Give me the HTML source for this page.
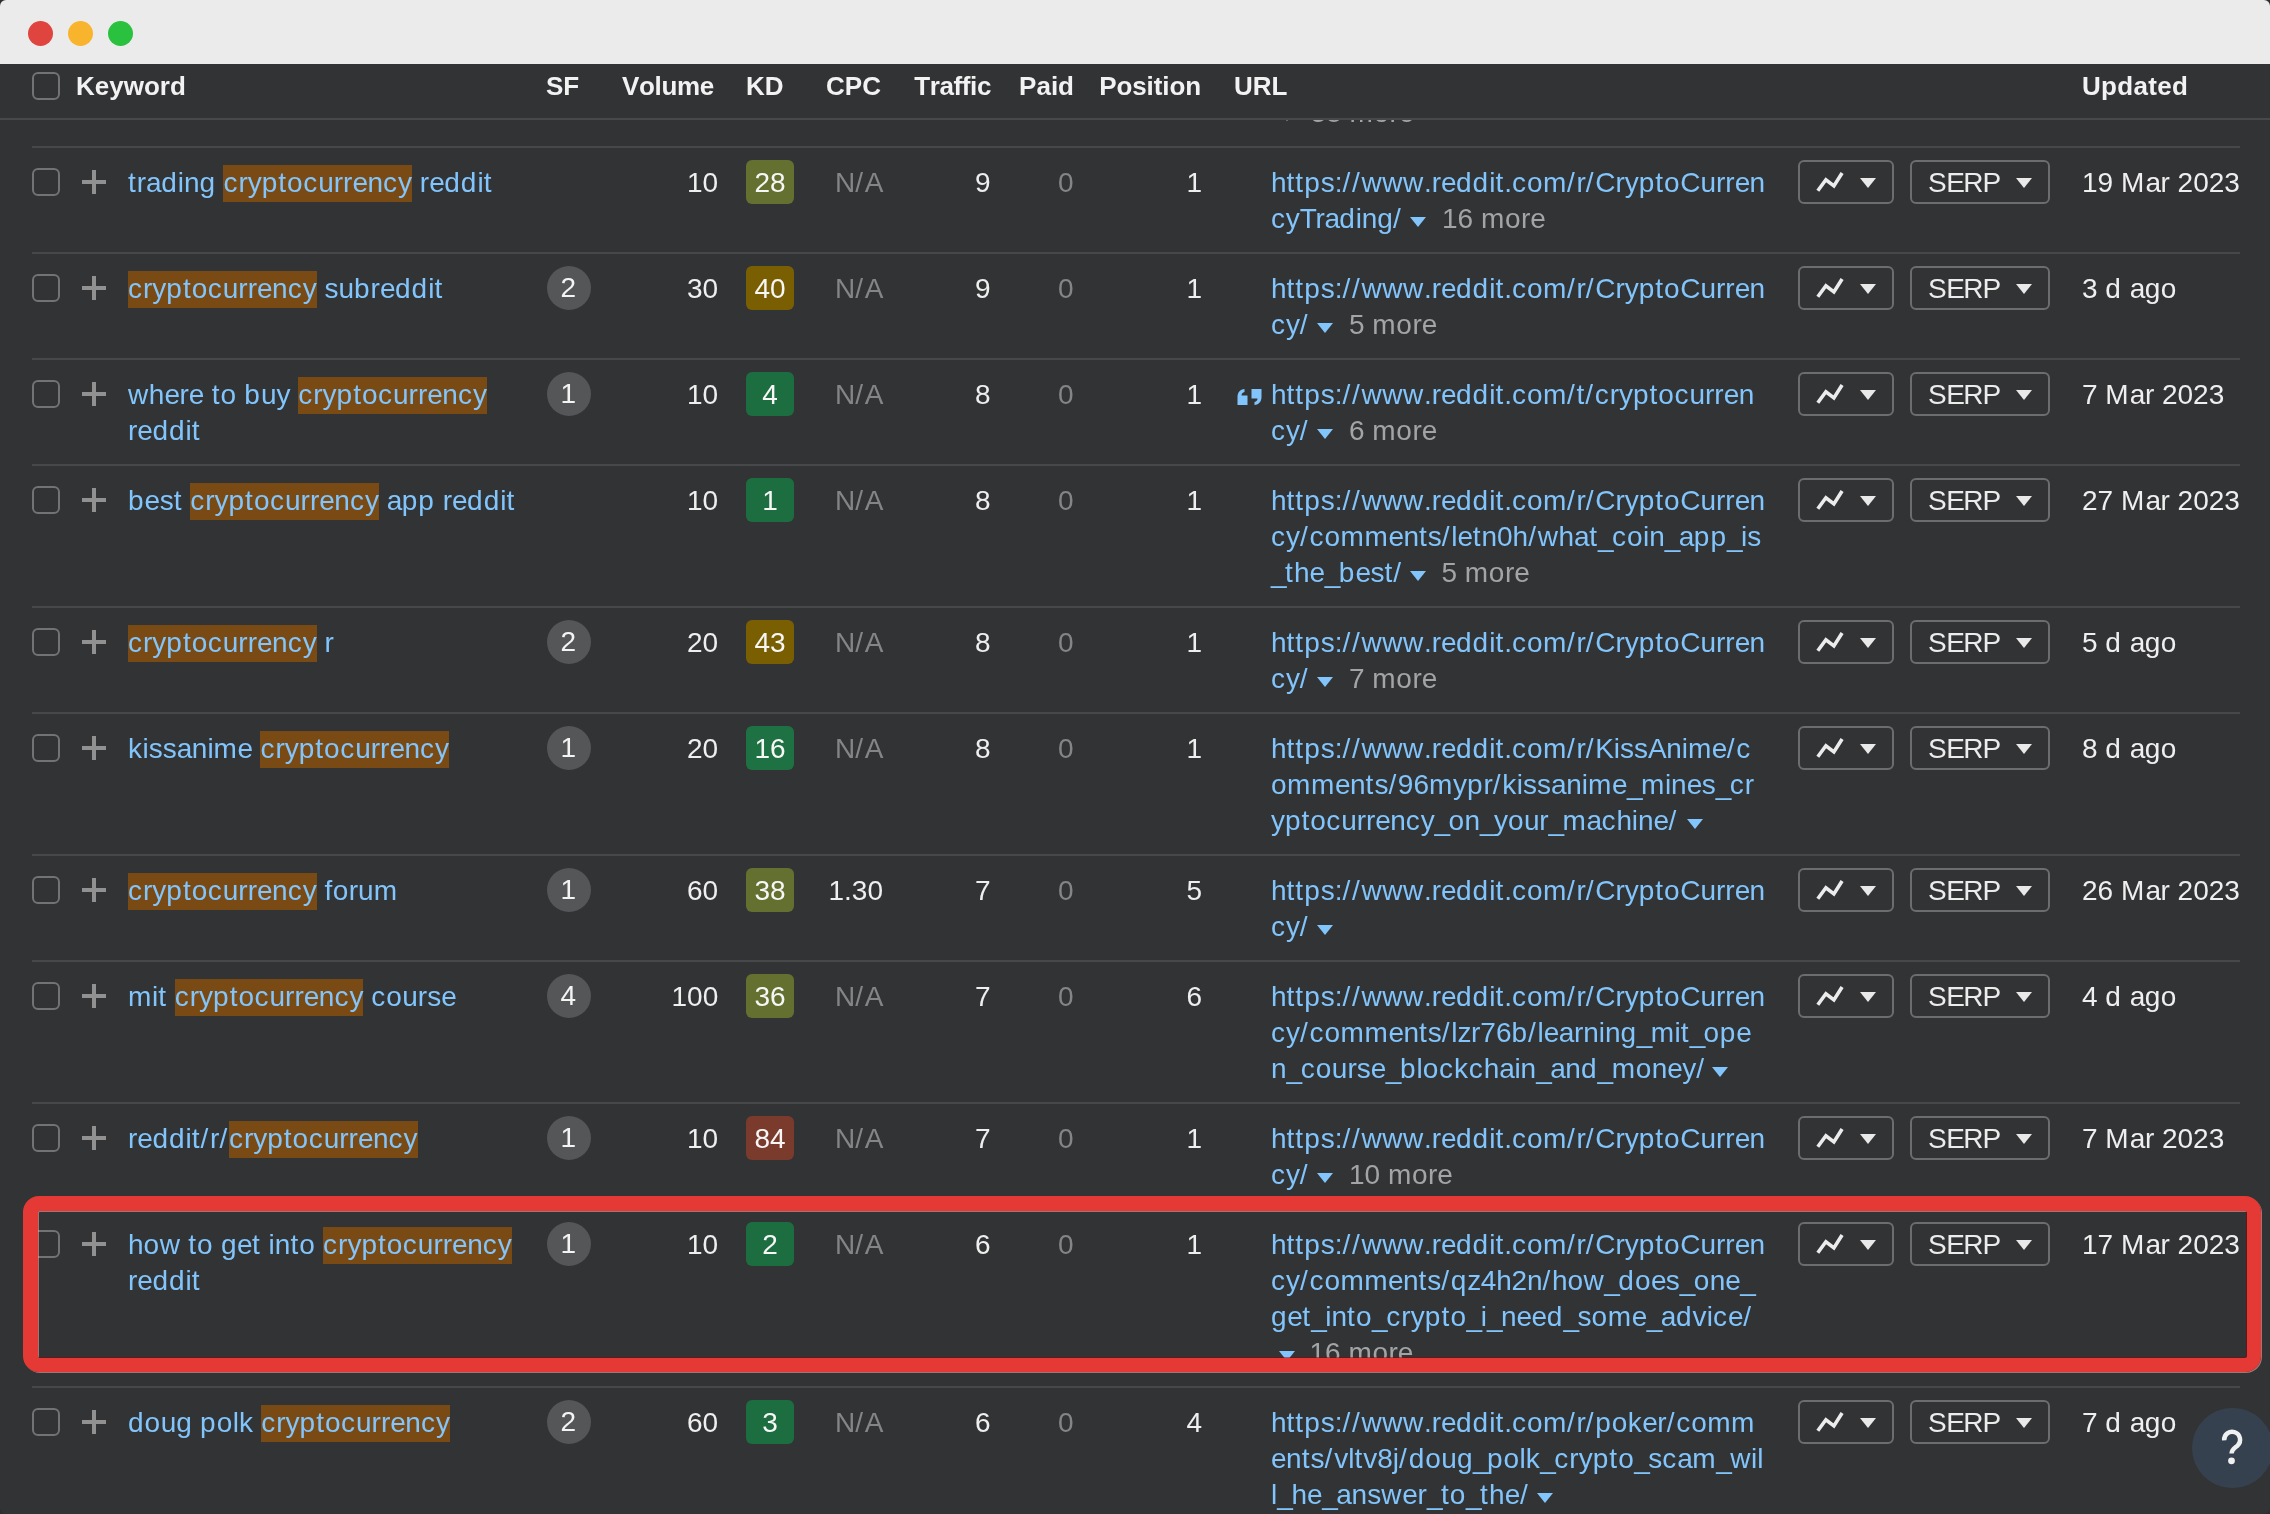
<!DOCTYPE html><html lang="en"><head><meta charset="utf-8"><title>Keywords</title><style>
*{box-sizing:border-box;margin:0;padding:0}
html,body{width:2270px;height:1514px;overflow:hidden;background:#2e2e2f}
body{font-family:"Liberation Sans",sans-serif;font-size:28px;line-height:36px;color:#efefef;position:relative;font-kerning:none}
#win{position:absolute;left:0;top:0;width:2270px;height:1514px;border-radius:6px;overflow:hidden;background:#323335;will-change:transform}
#tb{position:absolute;left:0;top:0;width:2270px;height:64px;background:#ebebeb}
.dot{position:absolute;top:21px;width:25px;height:25px;border-radius:50%}
#hd{position:absolute;left:0;top:64px;width:2270px;height:56px;background:#323335;border-bottom:2px solid #48494b;z-index:5;font-weight:700;font-size:26px;line-height:30px;color:#f2f2f2}
#hd span{position:absolute;top:7px;white-space:nowrap}
.cb{position:absolute;left:32px;width:28px;height:28px;border:2px solid #727375;border-radius:6px}
.row{position:absolute;left:32px;width:2208px;border-top:2px solid #47484a}
.row>*{position:absolute;white-space:nowrap}
.row .cb{left:0;top:20px}
.plus{left:50px;top:22px;width:24px;height:24px}
.plus:before{content:"";position:absolute;left:0;top:10px;width:24px;height:4px;background:#919191}
.plus:after{content:"";position:absolute;left:10px;top:0;width:4px;height:24px;background:#919191}
.kw{left:96px;top:17px;color:#82c5fc}
.kw b{font-weight:400;background:#7a4a14;padding:2px 0 4px}
.sf{left:515px;top:12px;width:44px;height:44px;border-radius:50%;background:#555658;text-align:center;line-height:44px;color:#f4f4f4;padding-right:1.5px}
.num{top:17px;text-align:right}
.vol{right:1521.8px}
.kd{left:714px;top:12px;width:48px;height:44px;border-radius:6px;text-align:center;line-height:45px;color:#f6f6f6}
.cpc{right:1357px}
.tr{right:1249.5px}
.paid{right:1166.5px;color:#848587}
.pos{right:1038px}
.mut{color:#848587}
.url{left:1239px;top:17px;color:#82c5fc}
.url div{height:36px;position:relative}
.more{color:#a3a4a5;position:absolute;top:0}
.tri{position:absolute;top:16px;width:0;height:0;border-left:8px solid transparent;border-right:8px solid transparent;border-top:10px solid #82c5fc}
.btn{top:12px;height:44px;border:2px solid #6c6d6f;border-radius:6px;color:#ececec}
.b1{left:1766px;width:96px}
.b2{left:1878px;width:140px}
.btn i{position:absolute;top:16px;width:0;height:0;border-left:8px solid transparent;border-right:8px solid transparent;border-top:10px solid #e9e9e9}
.b1 i{left:60px}
.b2 i{left:104px}
.b2>span{position:absolute;left:16px;top:3px}
.b1 svg{position:absolute;left:12px;top:5.7px}
.upd{left:2050px;top:17px}
.q{left:1205px;top:28px;line-height:0}
.q svg{display:block}
#red{position:absolute;left:23px;top:1196px;width:2238px;height:176px;border:solid #e53935;border-width:15px 14px 14px 15px;border-radius:16px;z-index:8;box-shadow:1px 1px 0 rgba(255,170,170,.55),inset 1px 1px 0 rgba(255,170,170,.55),inset -1px -1px 0 rgba(140,0,0,.5)}
#help{position:absolute;left:2192px;top:1407.5px;width:80.6px;height:80.6px;border-radius:50%;background:#36414f;z-index:9}
#help svg{position:absolute;left:0;top:0.5px}
</style></head><body><div id="win">
<div id="tb"><div class="dot" style="left:27.5px;background:#e0443e"></div><div class="dot" style="left:67.5px;background:#f9b42d"></div><div class="dot" style="left:107.5px;background:#2ac13f"></div></div>
<div id="hd"><div class="cb" style="top:8px"></div><span style="left:76px">Keyword</span><span style="left:546px">SF</span><span style="right:1556px;letter-spacing:-.3px">Volume</span><span style="left:746px">KD</span><span style="right:1389px">CPC</span><span style="right:1279px;letter-spacing:-.4px">Traffic</span><span style="right:1196px">Paid</span><span style="right:1069px;letter-spacing:-.1px">Position</span><span style="left:1234px">URL</span><span style="left:2082px;letter-spacing:.3px">Updated</span></div>
<div style="position:absolute;left:1271px;top:95px;height:36px;white-space:nowrap"><i class="tri" style="left:8px"></i><span class="more" style="left:39.5px">38 <span style="letter-spacing:0.6px">m</span><span style="letter-spacing:0.5px">o</span>r<span style="letter-spacing:-0.5px">e</span></span></div>
<div class="row" style="top:146px;height:106px"><div class="cb"></div><div class="plus"></div><div class="kw"><span style="letter-spacing:1px">t</span>r<span style="letter-spacing:-0.5px">a</span><span style="letter-spacing:1px">d</span>in<span style="letter-spacing:0.5px">g</span> <b><span style="letter-spacing:1px">c</span>ry<span style="letter-spacing:1px">pt</span><span style="letter-spacing:0.5px">o</span><span style="letter-spacing:1px">c</span>urr<span style="letter-spacing:-0.5px">e</span>n<span style="letter-spacing:1px">c</span>y</b> r<span style="letter-spacing:-0.5px">e</span><span style="letter-spacing:1px">dd</span>i<span style="letter-spacing:1px">t</span></div><div class="num vol">10</div><div class="kd" style="background:#647030">28</div><div class="num cpc mut">N<span style="letter-spacing:1.7px">/</span><span style="letter-spacing:-0.5px">A</span></div><div class="num tr">9</div><div class="num paid">0</div><div class="num pos">1</div><div class="url"><div>h<span style="letter-spacing:1px">ttp</span>s:<span style="letter-spacing:1.7px">//</span><span style="letter-spacing:0.6px">www</span>.r<span style="letter-spacing:-0.6px">e</span><span style="letter-spacing:1px">dd</span>i<span style="letter-spacing:1px">t</span>.<span style="letter-spacing:1px">c</span><span style="letter-spacing:0.5px">om</span><span style="letter-spacing:1.7px">/</span>r<span style="letter-spacing:1.7px">/</span>Cry<span style="letter-spacing:1px">pt</span><span style="letter-spacing:0.5px">o</span>Curr<span style="letter-spacing:-0.6px">e</span>n</div><div><span style="letter-spacing:0.8px">c</span><span style="letter-spacing:-0.2px">y</span><span style="letter-spacing:-1.3px">T</span><span style="letter-spacing:-0.2px">r</span><span style="letter-spacing:-0.8px">a</span><span style="letter-spacing:0.8px">d</span><span style="letter-spacing:-0.2px">in</span><span style="letter-spacing:0.3px">g</span><span style="letter-spacing:1.5px">/</span><i class="tri" style="left:139px"></i><span class="more" style="left:171px">16 <span style="letter-spacing:0.6px">m</span><span style="letter-spacing:0.5px">o</span>r<span style="letter-spacing:-0.5px">e</span></span></div></div><div class="btn b1"><svg width="32" height="26" viewBox="0 0 32 26"><polyline points="5.8,22.7 13.9,11.8 21.9,17.9 30.1,5" fill="none" stroke="#ececec" stroke-width="3.6" stroke-linejoin="miter"/></svg><i></i></div><div class="btn b2"><span><span style="letter-spacing:-0.5px">S</span><span style="letter-spacing:-1.6px">E</span><span style="letter-spacing:-1px">R</span><span style="letter-spacing:-0.5px">P</span></span><i></i></div><div class="upd">19 <span style="letter-spacing:1.1px">M</span><span style="letter-spacing:-0.5px">a</span>r 2023</div></div>
<div class="row" style="top:252px;height:106px"><div class="cb"></div><div class="plus"></div><div class="kw"><b><span style="letter-spacing:1px">c</span>ry<span style="letter-spacing:1px">pt</span><span style="letter-spacing:0.5px">o</span><span style="letter-spacing:1px">c</span>urr<span style="letter-spacing:-0.5px">e</span>n<span style="letter-spacing:1px">c</span>y</b> su<span style="letter-spacing:1px">b</span>r<span style="letter-spacing:-0.5px">e</span><span style="letter-spacing:1px">dd</span>i<span style="letter-spacing:1px">t</span></div><div class="sf">2</div><div class="num vol">30</div><div class="kd" style="background:#7a5f02">40</div><div class="num cpc mut">N<span style="letter-spacing:1.7px">/</span><span style="letter-spacing:-0.5px">A</span></div><div class="num tr">9</div><div class="num paid">0</div><div class="num pos">1</div><div class="url"><div>h<span style="letter-spacing:1px">ttp</span>s:<span style="letter-spacing:1.7px">//</span><span style="letter-spacing:0.6px">www</span>.r<span style="letter-spacing:-0.6px">e</span><span style="letter-spacing:1px">dd</span>i<span style="letter-spacing:1px">t</span>.<span style="letter-spacing:1px">c</span><span style="letter-spacing:0.5px">om</span><span style="letter-spacing:1.7px">/</span>r<span style="letter-spacing:1.7px">/</span>Cry<span style="letter-spacing:1px">pt</span><span style="letter-spacing:0.5px">o</span>Curr<span style="letter-spacing:-0.6px">e</span>n</div><div><span style="letter-spacing:0.9px">c</span><span style="letter-spacing:-0.2px">y</span><span style="letter-spacing:1.6px">/</span><i class="tri" style="left:46px"></i><span class="more" style="left:78px">5 <span style="letter-spacing:0.6px">m</span><span style="letter-spacing:0.5px">o</span>r<span style="letter-spacing:-0.5px">e</span></span></div></div><div class="btn b1"><svg width="32" height="26" viewBox="0 0 32 26"><polyline points="5.8,22.7 13.9,11.8 21.9,17.9 30.1,5" fill="none" stroke="#ececec" stroke-width="3.6" stroke-linejoin="miter"/></svg><i></i></div><div class="btn b2"><span><span style="letter-spacing:-0.5px">S</span><span style="letter-spacing:-1.6px">E</span><span style="letter-spacing:-1px">R</span><span style="letter-spacing:-0.5px">P</span></span><i></i></div><div class="upd">3 <span style="letter-spacing:1px">d</span> <span style="letter-spacing:-0.5px">a</span><span style="letter-spacing:0.5px">go</span></div></div>
<div class="row" style="top:358px;height:106px"><div class="cb"></div><div class="plus"></div><div class="kw"><span style="letter-spacing:0.6px">w</span>h<span style="letter-spacing:-0.5px">e</span>r<span style="letter-spacing:-0.5px">e</span> <span style="letter-spacing:1px">t</span><span style="letter-spacing:0.5px">o</span> <span style="letter-spacing:1px">b</span>uy <b><span style="letter-spacing:1px">c</span>ry<span style="letter-spacing:1px">pt</span><span style="letter-spacing:0.5px">o</span><span style="letter-spacing:1px">c</span>urr<span style="letter-spacing:-0.5px">e</span>n<span style="letter-spacing:1px">c</span>y</b><br>r<span style="letter-spacing:-0.5px">e</span><span style="letter-spacing:1px">dd</span>i<span style="letter-spacing:1px">t</span></div><div class="sf">1</div><div class="num vol">10</div><div class="kd" style="background:#1c6d40">4</div><div class="num cpc mut">N<span style="letter-spacing:1.7px">/</span><span style="letter-spacing:-0.5px">A</span></div><div class="num tr">8</div><div class="num paid">0</div><div class="num pos">1</div><div class="q"><svg width="26" height="18" viewBox="0 0 26 18"><path d="M0.5,17 V9 C0.5,4.5 3,1.5 7.5,1 V4 C5.5,4.5 4.6,5.8 4.5,7.5 H10.5 V17 Z M14.5,1 H24.5 V9 C24.5,13.5 22,16.5 17.5,17 V14 C19.5,13.5 20.4,12.2 20.5,10.5 H14.5 Z" fill="#82c5fc"/></svg></div><div class="url"><div>h<span style="letter-spacing:1px">ttp</span>s:<span style="letter-spacing:1.7px">//</span><span style="letter-spacing:0.6px">www</span>.r<span style="letter-spacing:-0.6px">e</span><span style="letter-spacing:1px">dd</span>i<span style="letter-spacing:1px">t</span>.<span style="letter-spacing:1px">c</span><span style="letter-spacing:0.5px">om</span><span style="letter-spacing:1.7px">/</span><span style="letter-spacing:1px">t</span><span style="letter-spacing:1.7px">/</span><span style="letter-spacing:1px">c</span>ry<span style="letter-spacing:1px">pt</span><span style="letter-spacing:0.5px">o</span><span style="letter-spacing:1px">c</span>urr<span style="letter-spacing:-0.6px">e</span>n</div><div><span style="letter-spacing:0.9px">c</span><span style="letter-spacing:-0.2px">y</span><span style="letter-spacing:1.6px">/</span><i class="tri" style="left:46px"></i><span class="more" style="left:78px">6 <span style="letter-spacing:0.6px">m</span><span style="letter-spacing:0.5px">o</span>r<span style="letter-spacing:-0.5px">e</span></span></div></div><div class="btn b1"><svg width="32" height="26" viewBox="0 0 32 26"><polyline points="5.8,22.7 13.9,11.8 21.9,17.9 30.1,5" fill="none" stroke="#ececec" stroke-width="3.6" stroke-linejoin="miter"/></svg><i></i></div><div class="btn b2"><span><span style="letter-spacing:-0.5px">S</span><span style="letter-spacing:-1.6px">E</span><span style="letter-spacing:-1px">R</span><span style="letter-spacing:-0.5px">P</span></span><i></i></div><div class="upd">7 <span style="letter-spacing:1.1px">M</span><span style="letter-spacing:-0.5px">a</span>r 2023</div></div>
<div class="row" style="top:464px;height:142px"><div class="cb"></div><div class="plus"></div><div class="kw"><span style="letter-spacing:1px">b</span><span style="letter-spacing:-0.5px">e</span>s<span style="letter-spacing:1px">t</span> <b><span style="letter-spacing:1px">c</span>ry<span style="letter-spacing:1px">pt</span><span style="letter-spacing:0.5px">o</span><span style="letter-spacing:1px">c</span>urr<span style="letter-spacing:-0.5px">e</span>n<span style="letter-spacing:1px">c</span>y</b> <span style="letter-spacing:-0.5px">a</span><span style="letter-spacing:1px">pp</span> r<span style="letter-spacing:-0.5px">e</span><span style="letter-spacing:1px">dd</span>i<span style="letter-spacing:1px">t</span></div><div class="num vol">10</div><div class="kd" style="background:#1c6d40">1</div><div class="num cpc mut">N<span style="letter-spacing:1.7px">/</span><span style="letter-spacing:-0.5px">A</span></div><div class="num tr">8</div><div class="num paid">0</div><div class="num pos">1</div><div class="url"><div>h<span style="letter-spacing:1px">ttp</span>s:<span style="letter-spacing:1.7px">//</span><span style="letter-spacing:0.6px">www</span>.r<span style="letter-spacing:-0.6px">e</span><span style="letter-spacing:1px">dd</span>i<span style="letter-spacing:1px">t</span>.<span style="letter-spacing:1px">c</span><span style="letter-spacing:0.5px">om</span><span style="letter-spacing:1.7px">/</span>r<span style="letter-spacing:1.7px">/</span>Cry<span style="letter-spacing:1px">pt</span><span style="letter-spacing:0.5px">o</span>Curr<span style="letter-spacing:-0.6px">e</span>n</div><div><span style="letter-spacing:1px">c</span>y<span style="letter-spacing:1.7px">/</span><span style="letter-spacing:1px">c</span><span style="letter-spacing:0.5px">o</span><span style="letter-spacing:0.6px">mm</span><span style="letter-spacing:-0.5px">e</span>n<span style="letter-spacing:1px">t</span>s<span style="letter-spacing:1.7px">/</span>l<span style="letter-spacing:-0.5px">e</span><span style="letter-spacing:1px">t</span>n0h<span style="letter-spacing:1.7px">/</span><span style="letter-spacing:0.6px">w</span>h<span style="letter-spacing:-0.5px">a</span><span style="letter-spacing:1px">t</span><span style="letter-spacing:-1.6px">_</span><span style="letter-spacing:1px">c</span><span style="letter-spacing:0.5px">o</span>in<span style="letter-spacing:-1.6px">_</span><span style="letter-spacing:-0.5px">a</span><span style="letter-spacing:1px">pp</span><span style="letter-spacing:-1.6px">_</span>is</div><div><span style="letter-spacing:-1.5px">_</span><span style="letter-spacing:1.1px">t</span>h<span style="letter-spacing:-0.5px">e</span><span style="letter-spacing:-1.5px">_</span><span style="letter-spacing:1.1px">b</span><span style="letter-spacing:-0.5px">e</span>s<span style="letter-spacing:1.1px">t</span><span style="letter-spacing:1.8px">/</span><i class="tri" style="left:139px"></i><span class="more" style="left:170.5px">5 <span style="letter-spacing:0.6px">m</span><span style="letter-spacing:0.5px">o</span>r<span style="letter-spacing:-0.5px">e</span></span></div></div><div class="btn b1"><svg width="32" height="26" viewBox="0 0 32 26"><polyline points="5.8,22.7 13.9,11.8 21.9,17.9 30.1,5" fill="none" stroke="#ececec" stroke-width="3.6" stroke-linejoin="miter"/></svg><i></i></div><div class="btn b2"><span><span style="letter-spacing:-0.5px">S</span><span style="letter-spacing:-1.6px">E</span><span style="letter-spacing:-1px">R</span><span style="letter-spacing:-0.5px">P</span></span><i></i></div><div class="upd">27 <span style="letter-spacing:1.1px">M</span><span style="letter-spacing:-0.5px">a</span>r 2023</div></div>
<div class="row" style="top:606px;height:106px"><div class="cb"></div><div class="plus"></div><div class="kw"><b><span style="letter-spacing:1px">c</span>ry<span style="letter-spacing:1px">pt</span><span style="letter-spacing:0.5px">o</span><span style="letter-spacing:1px">c</span>urr<span style="letter-spacing:-0.5px">e</span>n<span style="letter-spacing:1px">c</span>y</b> r</div><div class="sf">2</div><div class="num vol">20</div><div class="kd" style="background:#7a5f02">43</div><div class="num cpc mut">N<span style="letter-spacing:1.7px">/</span><span style="letter-spacing:-0.5px">A</span></div><div class="num tr">8</div><div class="num paid">0</div><div class="num pos">1</div><div class="url"><div>h<span style="letter-spacing:1px">ttp</span>s:<span style="letter-spacing:1.7px">//</span><span style="letter-spacing:0.6px">www</span>.r<span style="letter-spacing:-0.6px">e</span><span style="letter-spacing:1px">dd</span>i<span style="letter-spacing:1px">t</span>.<span style="letter-spacing:1px">c</span><span style="letter-spacing:0.5px">om</span><span style="letter-spacing:1.7px">/</span>r<span style="letter-spacing:1.7px">/</span>Cry<span style="letter-spacing:1px">pt</span><span style="letter-spacing:0.5px">o</span>Curr<span style="letter-spacing:-0.6px">e</span>n</div><div><span style="letter-spacing:0.9px">c</span><span style="letter-spacing:-0.2px">y</span><span style="letter-spacing:1.6px">/</span><i class="tri" style="left:46px"></i><span class="more" style="left:78px">7 <span style="letter-spacing:0.6px">m</span><span style="letter-spacing:0.5px">o</span>r<span style="letter-spacing:-0.5px">e</span></span></div></div><div class="btn b1"><svg width="32" height="26" viewBox="0 0 32 26"><polyline points="5.8,22.7 13.9,11.8 21.9,17.9 30.1,5" fill="none" stroke="#ececec" stroke-width="3.6" stroke-linejoin="miter"/></svg><i></i></div><div class="btn b2"><span><span style="letter-spacing:-0.5px">S</span><span style="letter-spacing:-1.6px">E</span><span style="letter-spacing:-1px">R</span><span style="letter-spacing:-0.5px">P</span></span><i></i></div><div class="upd">5 <span style="letter-spacing:1px">d</span> <span style="letter-spacing:-0.5px">a</span><span style="letter-spacing:0.5px">go</span></div></div>
<div class="row" style="top:712px;height:142px"><div class="cb"></div><div class="plus"></div><div class="kw"><span style="letter-spacing:0.5px">k</span>iss<span style="letter-spacing:-0.5px">a</span>ni<span style="letter-spacing:0.6px">m</span><span style="letter-spacing:-0.5px">e</span> <b><span style="letter-spacing:1px">c</span>ry<span style="letter-spacing:1px">pt</span><span style="letter-spacing:0.5px">o</span><span style="letter-spacing:1px">c</span>urr<span style="letter-spacing:-0.5px">e</span>n<span style="letter-spacing:1px">c</span>y</b></div><div class="sf">1</div><div class="num vol">20</div><div class="kd" style="background:#1d7142">16</div><div class="num cpc mut">N<span style="letter-spacing:1.7px">/</span><span style="letter-spacing:-0.5px">A</span></div><div class="num tr">8</div><div class="num paid">0</div><div class="num pos">1</div><div class="url"><div>h<span style="letter-spacing:1px">ttp</span>s:<span style="letter-spacing:1.7px">//</span><span style="letter-spacing:0.6px">www</span>.r<span style="letter-spacing:-0.6px">e</span><span style="letter-spacing:1px">dd</span>i<span style="letter-spacing:1px">t</span>.<span style="letter-spacing:1px">c</span><span style="letter-spacing:0.5px">om</span><span style="letter-spacing:1.7px">/</span>r<span style="letter-spacing:1.7px">/</span>Kiss<span style="letter-spacing:-0.6px">A</span>ni<span style="letter-spacing:0.5px">m</span><span style="letter-spacing:-0.6px">e</span><span style="letter-spacing:1.7px">/</span><span style="letter-spacing:1px">c</span></div><div><span style="letter-spacing:0.5px">o</span><span style="letter-spacing:0.6px">mm</span><span style="letter-spacing:-0.5px">e</span>n<span style="letter-spacing:1px">t</span>s<span style="letter-spacing:1.7px">/</span>96<span style="letter-spacing:0.6px">m</span>y<span style="letter-spacing:1px">p</span>r<span style="letter-spacing:1.7px">/</span><span style="letter-spacing:0.5px">k</span>iss<span style="letter-spacing:-0.5px">a</span>ni<span style="letter-spacing:0.6px">m</span><span style="letter-spacing:-0.5px">e</span><span style="letter-spacing:-1.6px">_</span><span style="letter-spacing:0.6px">m</span>in<span style="letter-spacing:-0.5px">e</span>s<span style="letter-spacing:-1.6px">_</span><span style="letter-spacing:1px">c</span>r</div><div><span style="letter-spacing:-0.1px">y</span><span style="letter-spacing:1px">pt</span><span style="letter-spacing:0.4px">o</span><span style="letter-spacing:1px">c</span><span style="letter-spacing:-0.1px">urr</span><span style="letter-spacing:-0.6px">e</span><span style="letter-spacing:-0.1px">n</span><span style="letter-spacing:1px">c</span><span style="letter-spacing:-0.1px">y</span><span style="letter-spacing:-1.6px">_</span><span style="letter-spacing:0.4px">o</span><span style="letter-spacing:-0.1px">n</span><span style="letter-spacing:-1.6px">_</span><span style="letter-spacing:-0.1px">y</span><span style="letter-spacing:0.4px">o</span><span style="letter-spacing:-0.1px">ur</span><span style="letter-spacing:-1.6px">_</span><span style="letter-spacing:0.5px">m</span><span style="letter-spacing:-0.6px">a</span><span style="letter-spacing:1px">c</span><span style="letter-spacing:-0.1px">hin</span><span style="letter-spacing:-0.6px">e</span><span style="letter-spacing:1.7px">/</span><i class="tri" style="left:415.5px"></i></div></div><div class="btn b1"><svg width="32" height="26" viewBox="0 0 32 26"><polyline points="5.8,22.7 13.9,11.8 21.9,17.9 30.1,5" fill="none" stroke="#ececec" stroke-width="3.6" stroke-linejoin="miter"/></svg><i></i></div><div class="btn b2"><span><span style="letter-spacing:-0.5px">S</span><span style="letter-spacing:-1.6px">E</span><span style="letter-spacing:-1px">R</span><span style="letter-spacing:-0.5px">P</span></span><i></i></div><div class="upd">8 <span style="letter-spacing:1px">d</span> <span style="letter-spacing:-0.5px">a</span><span style="letter-spacing:0.5px">go</span></div></div>
<div class="row" style="top:854px;height:106px"><div class="cb"></div><div class="plus"></div><div class="kw"><b><span style="letter-spacing:1px">c</span>ry<span style="letter-spacing:1px">pt</span><span style="letter-spacing:0.5px">o</span><span style="letter-spacing:1px">c</span>urr<span style="letter-spacing:-0.5px">e</span>n<span style="letter-spacing:1px">c</span>y</b> <span style="letter-spacing:0.5px">fo</span>ru<span style="letter-spacing:0.6px">m</span></div><div class="sf">1</div><div class="num vol">60</div><div class="kd" style="background:#647030">38</div><div class="num cpc">1.30</div><div class="num tr">7</div><div class="num paid">0</div><div class="num pos">5</div><div class="url"><div>h<span style="letter-spacing:1px">ttp</span>s:<span style="letter-spacing:1.7px">//</span><span style="letter-spacing:0.6px">www</span>.r<span style="letter-spacing:-0.6px">e</span><span style="letter-spacing:1px">dd</span>i<span style="letter-spacing:1px">t</span>.<span style="letter-spacing:1px">c</span><span style="letter-spacing:0.5px">om</span><span style="letter-spacing:1.7px">/</span>r<span style="letter-spacing:1.7px">/</span>Cry<span style="letter-spacing:1px">pt</span><span style="letter-spacing:0.5px">o</span>Curr<span style="letter-spacing:-0.6px">e</span>n</div><div><span style="letter-spacing:0.9px">c</span><span style="letter-spacing:-0.2px">y</span><span style="letter-spacing:1.6px">/</span><i class="tri" style="left:46px"></i></div></div><div class="btn b1"><svg width="32" height="26" viewBox="0 0 32 26"><polyline points="5.8,22.7 13.9,11.8 21.9,17.9 30.1,5" fill="none" stroke="#ececec" stroke-width="3.6" stroke-linejoin="miter"/></svg><i></i></div><div class="btn b2"><span><span style="letter-spacing:-0.5px">S</span><span style="letter-spacing:-1.6px">E</span><span style="letter-spacing:-1px">R</span><span style="letter-spacing:-0.5px">P</span></span><i></i></div><div class="upd">26 <span style="letter-spacing:1.1px">M</span><span style="letter-spacing:-0.5px">a</span>r 2023</div></div>
<div class="row" style="top:960px;height:142px"><div class="cb"></div><div class="plus"></div><div class="kw"><span style="letter-spacing:0.6px">m</span>i<span style="letter-spacing:1px">t</span> <b><span style="letter-spacing:1px">c</span>ry<span style="letter-spacing:1px">pt</span><span style="letter-spacing:0.5px">o</span><span style="letter-spacing:1px">c</span>urr<span style="letter-spacing:-0.5px">e</span>n<span style="letter-spacing:1px">c</span>y</b> <span style="letter-spacing:1px">c</span><span style="letter-spacing:0.5px">o</span>urs<span style="letter-spacing:-0.5px">e</span></div><div class="sf">4</div><div class="num vol">100</div><div class="kd" style="background:#647030">36</div><div class="num cpc mut">N<span style="letter-spacing:1.7px">/</span><span style="letter-spacing:-0.5px">A</span></div><div class="num tr">7</div><div class="num paid">0</div><div class="num pos">6</div><div class="url"><div>h<span style="letter-spacing:1px">ttp</span>s:<span style="letter-spacing:1.7px">//</span><span style="letter-spacing:0.6px">www</span>.r<span style="letter-spacing:-0.6px">e</span><span style="letter-spacing:1px">dd</span>i<span style="letter-spacing:1px">t</span>.<span style="letter-spacing:1px">c</span><span style="letter-spacing:0.5px">om</span><span style="letter-spacing:1.7px">/</span>r<span style="letter-spacing:1.7px">/</span>Cry<span style="letter-spacing:1px">pt</span><span style="letter-spacing:0.5px">o</span>Curr<span style="letter-spacing:-0.6px">e</span>n</div><div><span style="letter-spacing:1px">c</span>y<span style="letter-spacing:1.7px">/</span><span style="letter-spacing:1px">c</span><span style="letter-spacing:0.5px">o</span><span style="letter-spacing:0.6px">mm</span><span style="letter-spacing:-0.5px">e</span>n<span style="letter-spacing:1px">t</span>s<span style="letter-spacing:1.7px">/</span>l<span style="letter-spacing:-0.6px">z</span>r76<span style="letter-spacing:1px">b</span><span style="letter-spacing:1.7px">/</span>l<span style="letter-spacing:-0.5px">ea</span>rnin<span style="letter-spacing:0.5px">g</span><span style="letter-spacing:-1.6px">_</span><span style="letter-spacing:0.6px">m</span>i<span style="letter-spacing:1px">t</span><span style="letter-spacing:-1.6px">_</span><span style="letter-spacing:0.5px">o</span><span style="letter-spacing:1px">p</span><span style="letter-spacing:-0.5px">e</span></div><div>n<span style="letter-spacing:-1.5px">_</span><span style="letter-spacing:1.1px">c</span><span style="letter-spacing:0.5px">o</span>urs<span style="letter-spacing:-0.5px">e</span><span style="letter-spacing:-1.5px">_</span><span style="letter-spacing:1.1px">b</span>l<span style="letter-spacing:0.5px">o</span><span style="letter-spacing:1.1px">c</span><span style="letter-spacing:0.6px">k</span><span style="letter-spacing:1.1px">c</span>h<span style="letter-spacing:-0.5px">a</span>in<span style="letter-spacing:-1.5px">_</span><span style="letter-spacing:-0.5px">a</span>n<span style="letter-spacing:1.1px">d</span><span style="letter-spacing:-1.5px">_</span><span style="letter-spacing:0.6px">m</span><span style="letter-spacing:0.5px">o</span>n<span style="letter-spacing:-0.5px">e</span>y<span style="letter-spacing:1.8px">/</span><i class="tri" style="left:441px"></i></div></div><div class="btn b1"><svg width="32" height="26" viewBox="0 0 32 26"><polyline points="5.8,22.7 13.9,11.8 21.9,17.9 30.1,5" fill="none" stroke="#ececec" stroke-width="3.6" stroke-linejoin="miter"/></svg><i></i></div><div class="btn b2"><span><span style="letter-spacing:-0.5px">S</span><span style="letter-spacing:-1.6px">E</span><span style="letter-spacing:-1px">R</span><span style="letter-spacing:-0.5px">P</span></span><i></i></div><div class="upd">4 <span style="letter-spacing:1px">d</span> <span style="letter-spacing:-0.5px">a</span><span style="letter-spacing:0.5px">go</span></div></div>
<div class="row" style="top:1102px;height:106px"><div class="cb"></div><div class="plus"></div><div class="kw">r<span style="letter-spacing:-0.5px">e</span><span style="letter-spacing:1px">dd</span>i<span style="letter-spacing:1px">t</span><span style="letter-spacing:1.7px">/</span>r<span style="letter-spacing:1.7px">/</span><b><span style="letter-spacing:1px">c</span>ry<span style="letter-spacing:1px">pt</span><span style="letter-spacing:0.5px">o</span><span style="letter-spacing:1px">c</span>urr<span style="letter-spacing:-0.5px">e</span>n<span style="letter-spacing:1px">c</span>y</b></div><div class="sf">1</div><div class="num vol">10</div><div class="kd" style="background:#7b3b2c">84</div><div class="num cpc mut">N<span style="letter-spacing:1.7px">/</span><span style="letter-spacing:-0.5px">A</span></div><div class="num tr">7</div><div class="num paid">0</div><div class="num pos">1</div><div class="url"><div>h<span style="letter-spacing:1px">ttp</span>s:<span style="letter-spacing:1.7px">//</span><span style="letter-spacing:0.6px">www</span>.r<span style="letter-spacing:-0.6px">e</span><span style="letter-spacing:1px">dd</span>i<span style="letter-spacing:1px">t</span>.<span style="letter-spacing:1px">c</span><span style="letter-spacing:0.5px">om</span><span style="letter-spacing:1.7px">/</span>r<span style="letter-spacing:1.7px">/</span>Cry<span style="letter-spacing:1px">pt</span><span style="letter-spacing:0.5px">o</span>Curr<span style="letter-spacing:-0.6px">e</span>n</div><div><span style="letter-spacing:0.9px">c</span><span style="letter-spacing:-0.2px">y</span><span style="letter-spacing:1.6px">/</span><i class="tri" style="left:46px"></i><span class="more" style="left:78px">10 <span style="letter-spacing:0.6px">m</span><span style="letter-spacing:0.5px">o</span>r<span style="letter-spacing:-0.5px">e</span></span></div></div><div class="btn b1"><svg width="32" height="26" viewBox="0 0 32 26"><polyline points="5.8,22.7 13.9,11.8 21.9,17.9 30.1,5" fill="none" stroke="#ececec" stroke-width="3.6" stroke-linejoin="miter"/></svg><i></i></div><div class="btn b2"><span><span style="letter-spacing:-0.5px">S</span><span style="letter-spacing:-1.6px">E</span><span style="letter-spacing:-1px">R</span><span style="letter-spacing:-0.5px">P</span></span><i></i></div><div class="upd">7 <span style="letter-spacing:1.1px">M</span><span style="letter-spacing:-0.5px">a</span>r 2023</div></div>
<div class="row" style="top:1208px;height:178px"><div class="cb"></div><div class="plus"></div><div class="kw">h<span style="letter-spacing:0.5px">o</span><span style="letter-spacing:0.6px">w</span> <span style="letter-spacing:1px">t</span><span style="letter-spacing:0.5px">o</span> <span style="letter-spacing:0.5px">g</span><span style="letter-spacing:-0.5px">e</span><span style="letter-spacing:1px">t</span> in<span style="letter-spacing:1px">t</span><span style="letter-spacing:0.5px">o</span> <b><span style="letter-spacing:1px">c</span>ry<span style="letter-spacing:1px">pt</span><span style="letter-spacing:0.5px">o</span><span style="letter-spacing:1px">c</span>urr<span style="letter-spacing:-0.5px">e</span>n<span style="letter-spacing:1px">c</span>y</b><br>r<span style="letter-spacing:-0.5px">e</span><span style="letter-spacing:1px">dd</span>i<span style="letter-spacing:1px">t</span></div><div class="sf">1</div><div class="num vol">10</div><div class="kd" style="background:#1c6d40">2</div><div class="num cpc mut">N<span style="letter-spacing:1.7px">/</span><span style="letter-spacing:-0.5px">A</span></div><div class="num tr">6</div><div class="num paid">0</div><div class="num pos">1</div><div class="url"><div>h<span style="letter-spacing:1px">ttp</span>s:<span style="letter-spacing:1.7px">//</span><span style="letter-spacing:0.6px">www</span>.r<span style="letter-spacing:-0.6px">e</span><span style="letter-spacing:1px">dd</span>i<span style="letter-spacing:1px">t</span>.<span style="letter-spacing:1px">c</span><span style="letter-spacing:0.5px">om</span><span style="letter-spacing:1.7px">/</span>r<span style="letter-spacing:1.7px">/</span>Cry<span style="letter-spacing:1px">pt</span><span style="letter-spacing:0.5px">o</span>Curr<span style="letter-spacing:-0.6px">e</span>n</div><div><span style="letter-spacing:1px">c</span><span style="letter-spacing:-0.1px">y</span><span style="letter-spacing:1.7px">/</span><span style="letter-spacing:1px">c</span><span style="letter-spacing:0.4px">o</span><span style="letter-spacing:0.5px">mm</span><span style="letter-spacing:-0.6px">e</span><span style="letter-spacing:-0.1px">n</span><span style="letter-spacing:1px">t</span><span style="letter-spacing:-0.1px">s</span><span style="letter-spacing:1.7px">/</span><span style="letter-spacing:1px">q</span><span style="letter-spacing:-0.6px">z</span><span style="letter-spacing:-0.1px">4h2n</span><span style="letter-spacing:1.7px">/</span><span style="letter-spacing:-0.1px">h</span><span style="letter-spacing:0.4px">o</span><span style="letter-spacing:0.6px">w</span><span style="letter-spacing:-1.6px">_</span><span style="letter-spacing:1px">d</span><span style="letter-spacing:0.4px">o</span><span style="letter-spacing:-0.6px">e</span><span style="letter-spacing:-0.1px">s</span><span style="letter-spacing:-1.6px">_</span><span style="letter-spacing:0.4px">o</span><span style="letter-spacing:-0.1px">n</span><span style="letter-spacing:-0.6px">e</span><span style="letter-spacing:-1.6px">_</span></div><div><span style="letter-spacing:0.6px">g</span><span style="letter-spacing:-0.5px">e</span><span style="letter-spacing:1.1px">t</span><span style="letter-spacing:-1.5px">_</span>in<span style="letter-spacing:1.1px">t</span><span style="letter-spacing:0.6px">o</span><span style="letter-spacing:-1.5px">_</span><span style="letter-spacing:1.1px">c</span><span style="letter-spacing:0.1px">ry</span><span style="letter-spacing:1.1px">pt</span><span style="letter-spacing:0.6px">o</span><span style="letter-spacing:-1.5px">_</span>i<span style="letter-spacing:-1.5px">_</span>n<span style="letter-spacing:-0.5px">ee</span><span style="letter-spacing:1.1px">d</span><span style="letter-spacing:-1.5px">_</span><span style="letter-spacing:0.1px">s</span><span style="letter-spacing:0.6px">om</span><span style="letter-spacing:-0.5px">e</span><span style="letter-spacing:-1.5px">_</span><span style="letter-spacing:-0.5px">a</span><span style="letter-spacing:1.1px">d</span><span style="letter-spacing:0.1px">v</span>i<span style="letter-spacing:1.1px">c</span><span style="letter-spacing:-0.5px">e</span><span style="letter-spacing:1.8px">/</span></div><div><i class="tri" style="left:8px"></i><span class="more" style="left:38.5px">16 <span style="letter-spacing:0.6px">m</span><span style="letter-spacing:0.5px">o</span>r<span style="letter-spacing:-0.5px">e</span></span></div></div><div class="btn b1"><svg width="32" height="26" viewBox="0 0 32 26"><polyline points="5.8,22.7 13.9,11.8 21.9,17.9 30.1,5" fill="none" stroke="#ececec" stroke-width="3.6" stroke-linejoin="miter"/></svg><i></i></div><div class="btn b2"><span><span style="letter-spacing:-0.5px">S</span><span style="letter-spacing:-1.6px">E</span><span style="letter-spacing:-1px">R</span><span style="letter-spacing:-0.5px">P</span></span><i></i></div><div class="upd">17 <span style="letter-spacing:1.1px">M</span><span style="letter-spacing:-0.5px">a</span>r 2023</div></div>
<div class="row" style="top:1386px;height:142px"><div class="cb"></div><div class="plus"></div><div class="kw"><span style="letter-spacing:1px">d</span><span style="letter-spacing:0.5px">o</span>u<span style="letter-spacing:0.5px">g</span> <span style="letter-spacing:1px">p</span><span style="letter-spacing:0.5px">o</span>l<span style="letter-spacing:0.5px">k</span> <b><span style="letter-spacing:1px">c</span>ry<span style="letter-spacing:1px">pt</span><span style="letter-spacing:0.5px">o</span><span style="letter-spacing:1px">c</span>urr<span style="letter-spacing:-0.5px">e</span>n<span style="letter-spacing:1px">c</span>y</b></div><div class="sf">2</div><div class="num vol">60</div><div class="kd" style="background:#1c6d40">3</div><div class="num cpc mut">N<span style="letter-spacing:1.7px">/</span><span style="letter-spacing:-0.5px">A</span></div><div class="num tr">6</div><div class="num paid">0</div><div class="num pos">4</div><div class="url"><div>h<span style="letter-spacing:1px">ttp</span>s:<span style="letter-spacing:1.7px">//</span><span style="letter-spacing:0.6px">www</span>.r<span style="letter-spacing:-0.6px">e</span><span style="letter-spacing:1px">dd</span>i<span style="letter-spacing:1px">t</span>.<span style="letter-spacing:1px">c</span><span style="letter-spacing:0.5px">om</span><span style="letter-spacing:1.7px">/</span>r<span style="letter-spacing:1.7px">/</span><span style="letter-spacing:1px">p</span><span style="letter-spacing:0.5px">ok</span><span style="letter-spacing:-0.6px">e</span>r<span style="letter-spacing:1.7px">/</span><span style="letter-spacing:1px">c</span><span style="letter-spacing:0.5px">omm</span></div><div><span style="letter-spacing:-0.5px">e</span>n<span style="letter-spacing:1.1px">t</span>s<span style="letter-spacing:1.8px">/</span>vl<span style="letter-spacing:1.1px">t</span>v8j<span style="letter-spacing:1.8px">/</span><span style="letter-spacing:1px">d</span><span style="letter-spacing:0.5px">o</span>u<span style="letter-spacing:0.5px">g</span><span style="letter-spacing:-1.6px">_</span><span style="letter-spacing:1px">p</span><span style="letter-spacing:0.5px">o</span>l<span style="letter-spacing:0.5px">k</span><span style="letter-spacing:-1.6px">_</span><span style="letter-spacing:1px">c</span>ry<span style="letter-spacing:1px">p</span><span style="letter-spacing:1.1px">t</span><span style="letter-spacing:0.5px">o</span><span style="letter-spacing:-1.6px">_</span>s<span style="letter-spacing:1px">c</span><span style="letter-spacing:-0.5px">a</span><span style="letter-spacing:0.6px">m</span><span style="letter-spacing:-1.6px">_</span><span style="letter-spacing:0.6px">w</span>il</div><div><span style="letter-spacing:0.1px">l</span><span style="letter-spacing:-1.5px">_</span><span style="letter-spacing:0.1px">h</span><span style="letter-spacing:-0.4px">e</span><span style="letter-spacing:-1.5px">_</span><span style="letter-spacing:-0.4px">a</span><span style="letter-spacing:0.1px">ns</span><span style="letter-spacing:0.7px">w</span><span style="letter-spacing:-0.4px">e</span><span style="letter-spacing:0.1px">r</span><span style="letter-spacing:-1.5px">_</span><span style="letter-spacing:1.1px">t</span><span style="letter-spacing:0.6px">o</span><span style="letter-spacing:-1.5px">_</span><span style="letter-spacing:1.1px">t</span><span style="letter-spacing:0.1px">h</span><span style="letter-spacing:-0.4px">e</span><span style="letter-spacing:1.8px">/</span><i class="tri" style="left:265.5px"></i></div></div><div class="btn b1"><svg width="32" height="26" viewBox="0 0 32 26"><polyline points="5.8,22.7 13.9,11.8 21.9,17.9 30.1,5" fill="none" stroke="#ececec" stroke-width="3.6" stroke-linejoin="miter"/></svg><i></i></div><div class="btn b2"><span><span style="letter-spacing:-0.5px">S</span><span style="letter-spacing:-1.6px">E</span><span style="letter-spacing:-1px">R</span><span style="letter-spacing:-0.5px">P</span></span><i></i></div><div class="upd">7 <span style="letter-spacing:1px">d</span> <span style="letter-spacing:-0.5px">a</span><span style="letter-spacing:0.5px">go</span></div></div>
<div id="red"></div>
<div id="help"><svg width="80" height="80" viewBox="0 0 80 80"><path d="M32.15,32.4 A8,8 0 1 1 45.7,37.5 C42.4,40.3 39.5,41.4 39.5,45.6" fill="none" stroke="#eef0f1" stroke-width="4.4"/><circle cx="39.5" cy="52.8" r="3.4" fill="#eef0f1"/></svg></div>
</div></body></html>
